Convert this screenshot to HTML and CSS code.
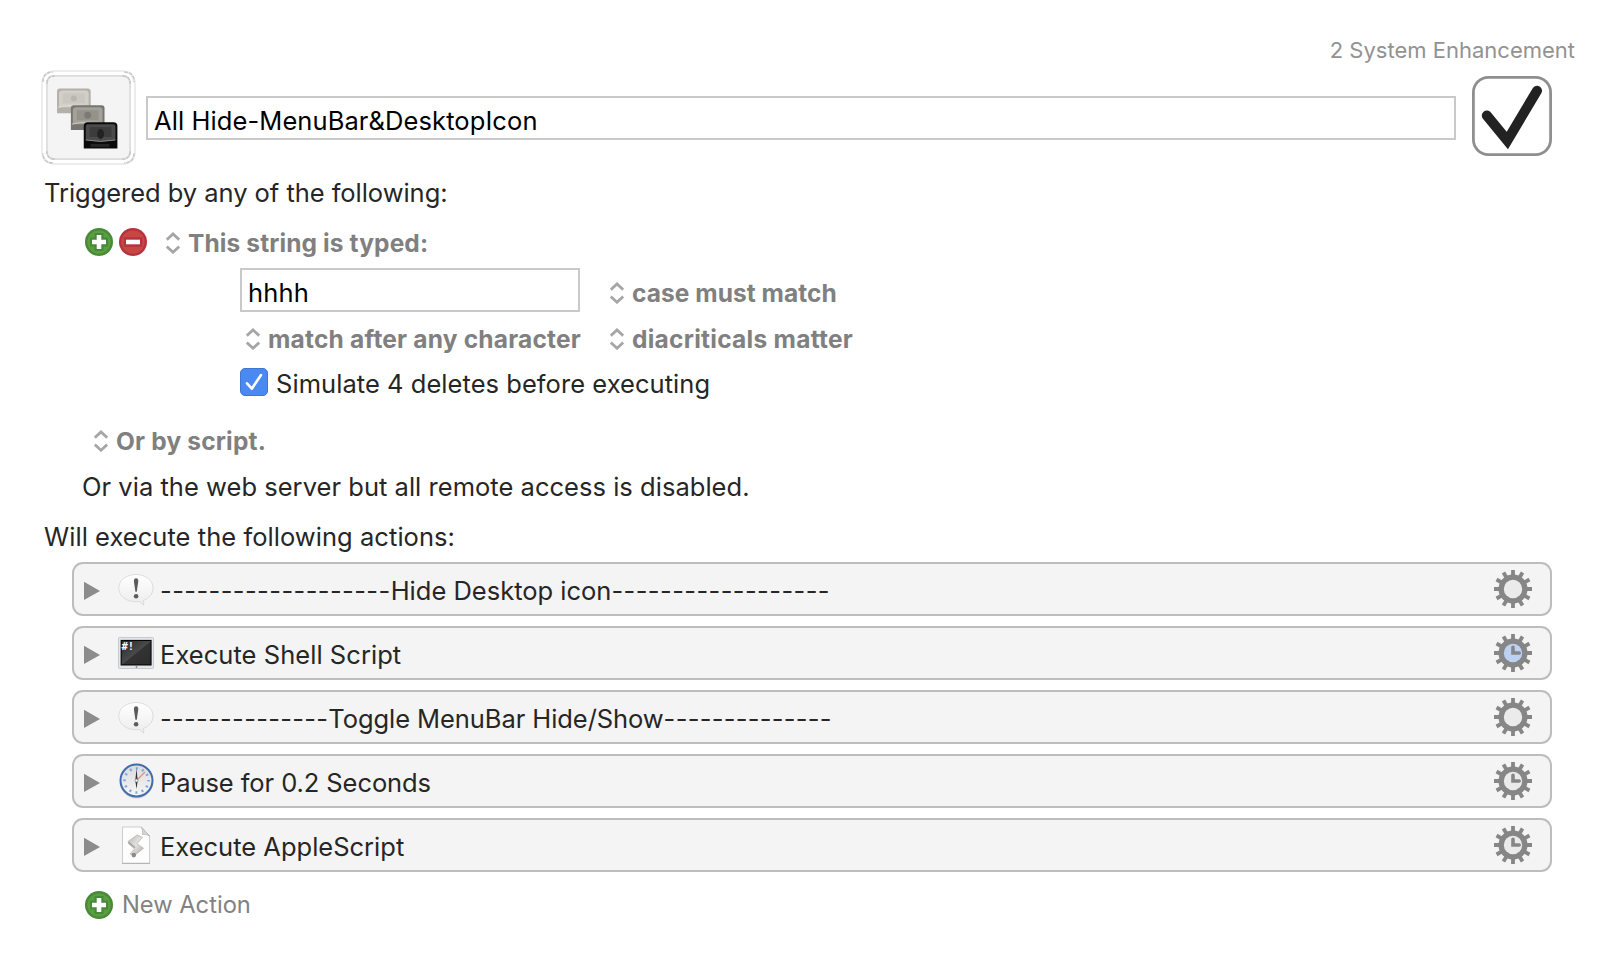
FILE: index.html
```
<!DOCTYPE html>
<html lang="en">
<head>
<meta charset="utf-8">
<title>Macro editor</title>
<link rel="stylesheet" href="styles.css">
</head>
<body>
<svg class="defs" width="0" height="0" aria-hidden="true">
  <defs>
    <linearGradient id="g-bubble" x1="0" y1="0" x2="0" y2="1"><stop offset="0" stop-color="#fff"/><stop offset="1" stop-color="#ececec"/></linearGradient>
    <linearGradient id="g-screen" x1="0" y1="0" x2="1" y2="1"><stop offset="0" stop-color="#2a2a2a"/><stop offset=".5" stop-color="#4a4a4a"/><stop offset=".52" stop-color="#333"/><stop offset="1" stop-color="#2c2c2c"/></linearGradient>
    <linearGradient id="g-face" x1="0" y1="0" x2="0" y2="1"><stop offset="0" stop-color="#d9dadc"/><stop offset="1" stop-color="#f7f7f7"/></linearGradient>
    <linearGradient id="g-scroll" x1="0" y1="0" x2="1" y2="1"><stop offset="0" stop-color="#b9b5b5"/><stop offset=".5" stop-color="#e4e1e1"/><stop offset="1" stop-color="#aaa6a6"/></linearGradient>
    <symbol id="updown" viewBox="0 0 14 22"><path d="M.800 7.600 7 2l6.200 5.600M.800 14.600 7 20.200l6.200-5.600" fill="none" stroke="#a6a6a6" stroke-width="2.800"/></symbol>
    <symbol id="plus" viewBox="0 0 28 28"><circle cx="14" cy="14" r="14" fill="#488a37"/><circle cx="14" cy="14" r="11.600" fill="#5a9e40"/><path d="M9.500 5h9v4.500H23v9h-4.500V23h-9v-4.500H5v-9h4.500z" fill="#47893a"/><path d="M11.700 7h4.600v4.700H21v4.600h-4.700V21h-4.600v-4.700H7v-4.600h4.700z" fill="#fff"/></symbol>
    <symbol id="minus" viewBox="0 0 28 28"><circle cx="14" cy="14" r="14" fill="#b5323f"/><circle cx="14" cy="14" r="11.600" fill="#c74743"/><path d="M4.800 9.300h18.400v9.400H4.800z" fill="#b5323f"/><path d="M7 11.700h14v4.600H7z" fill="#fff"/></symbol>
    <symbol id="tri" viewBox="0 0 16 20"><path d="M0 .700v18.300L16 10z" fill="#8c8c8c"/></symbol>
    <symbol id="bubble" viewBox="0 -1 36 38"><path d="M18 3.500C8.300 3.500.800 9.300.800 17S8.300 30.800 18 30.800c1.200 0 2.500-.100 3.600-.300 1 1.400 2.200 2.500 4 3.500.100-1.800-.100-3.300-.300-4.500C31.200 27.300 35 22.700 35 17 35 9.300 27.700 3.500 18 3.500z" fill="url(#g-bubble)" stroke="#d6d6d6" stroke-width=".800"/><path d="M15.900 9.800c0-3.300 4.400-3.300 4.400 0 0 2.200-1.100 7-1.500 11h-1.400c-.400-4-1.500-8.800-1.500-11z" fill="#5c5c5c"/><circle cx="18.100" cy="25.300" r="2.300" fill="#5c5c5c"/></symbol>
    <symbol id="shell" viewBox="0 0 36 36"><rect x=".500" y="2.500" width="35" height="31" rx=".800" fill="#e4e5eb" stroke="#c4c6ce" stroke-width=".900"/><rect x="2.600" y="4.900" width="31" height="25.600" fill="#050505"/><rect x="3.700" y="6" width="28.800" height="23.400" fill="url(#g-screen)"/><circle cx="18.500" cy="32" r=".900" fill="#888"/><text class="glyph-mono" x="3.500" y="15">#!</text></symbol>
    <symbol id="clock" viewBox="0 0 36 36"><ellipse cx="18.500" cy="19.500" rx="16.500" ry="16" fill="#bbb" opacity=".6"/><circle cx="18.500" cy="17.500" r="16" fill="url(#g-face)" stroke="#416bab" stroke-width="2"/><circle cx="18.500" cy="17.500" r="12" fill="none" stroke="#7fa5e4" stroke-width="2.600" stroke-dasharray="2 4.283" stroke-dashoffset="1"/><path d="m18.500 17.500 8.500-8.500" stroke="#e58e80" stroke-width="1.300"/><path d="M18.500 5.500 19.700 17.500l-1.200 8.500-1.200-8.500z" fill="#333"/><circle cx="18.500" cy="17.500" r="1.500" fill="#fff" stroke="#777" stroke-width=".600"/></symbol>
    <symbol id="script" viewBox="0 .5 36 38"><path d="M4.500 1.500h18.800l8.300 9v27.200H4.500z" fill="#fdfdfd" stroke="#c7c7c7" stroke-width=".900"/><path d="M4 38h28" stroke="#b5b5b5"/><path d="m23.300 1.500 8.300 9c-3-1.600-5-2-7.300-1.500.500-2.500.200-5-1-7.500z" fill="#d5d5d5" stroke="#aaa" stroke-width=".600"/><path d="M11 18.500 10 16l9-6.500 5.500 2.300-5.500 6.400 6.500 4.600-9 7.200-4.500-1.500 4.500-5z" fill="url(#g-scroll)" stroke="#b3aeae" stroke-width=".700" stroke-linejoin="round"/><path d="m10.500 17 6.500 5" fill="none" stroke="#a09b9b" stroke-width="1.400"/><circle cx="15.800" cy="29.600" r="2.300" fill="#8f8a8a"/></symbol>
    <symbol id="teeth" viewBox="0 0 38 38"><g stroke="#868686" stroke-width="3.800"><path d="M19 0v38"/><path d="M19 0v38" transform="rotate(30 19 19)"/><path d="M19 0v38" transform="rotate(60 19 19)"/><path d="M0 19h38"/><path d="M19 0v38" transform="rotate(120 19 19)"/><path d="M19 0v38" transform="rotate(150 19 19)"/></g><circle cx="19" cy="19" r="14.500" fill="#868686"/></symbol>
    <symbol id="gear" viewBox="0 0 38 38"><use href="#teeth"/><circle cx="19" cy="19" r="9.200" fill="#ebebeb"/></symbol>
    <symbol id="gear-clock" viewBox="0 0 38 38"><use href="#teeth"/><circle cx="19" cy="19" r="9.200" fill="#ebebeb"/><path d="M19 13.200V19h6.200" fill="none" stroke="#868686" stroke-width="3.600" stroke-linecap="round"/></symbol>
    <symbol id="gear-blue" viewBox="0 0 38 38"><use href="#teeth"/><circle cx="19" cy="19" r="9.200" fill="#bdd1f2"/><path d="M19 13.200V19h6.200" fill="none" stroke="#868686" stroke-width="3.600" stroke-linecap="round"/></symbol>
  </defs>
</svg>
<main class="editor">
  <div class="group"><span class="t">2 System Enhancement</span></div>
  <header class="head">
    <svg class="macro-icon" viewBox="0 0 96 96">
      <rect x="1" y="1" width="94" height="94" rx="13" fill="#fff" stroke="#ededed" stroke-width="2"/>
      <rect x="6" y="6" width="84" height="84" rx="7" fill="#f4f4f4" stroke="#dcdcdc" stroke-width="1.700"/>
      <g fill="none" stroke="#c8c8c8" stroke-width="1.600" stroke-dasharray="4 1"><path d="M2 12Q2 2 12 2M84 2q10 0 10 10M94 84q0 10-10 10M12 94Q2 94 2 84"/><path d="M6 14q0-8 8-8M82 6q8 0 8 8M90 82q0 8-8 8M14 90q-8 0-8-8"/></g>
      <g transform="translate(-.8 -.3)">
        <path d="M17 44V22q0-3 3-3h28q3 0 3 3v22z" fill="#b2b0a9"/><path d="M19 38V24q0-3 3-3h24q3 0 3 3v14z" fill="#d1cfc7"/><path d="M23 24h22v10H23z" fill="#c9c7c0"/><circle cx="34" cy="29" r="3" fill="#b8b6ae"/><path d="M18 38q16-4 32 0" stroke="#deddd6" fill="none"/>
        <path d="M31 61V39q0-3 3-3h28q3 0 3 3v22z" fill="#77756f"/><path d="M33 55V41q0-3 3-3h24q3 0 3 3v14z" fill="#a3a199"/><path d="M37 41h22v10H37z" fill="#949289"/><circle cx="48" cy="46" r="3.500" fill="#7c7a74"/><path d="M32 55q16-4 32 0" stroke="#c9c7bf" fill="none"/>
        <path d="M44 79.500V57q0-4 4-4h26q4 0 4 4v22.500z" fill="#0b0b0b"/><path d="M46 71V57q0-2 2-2h26q2 0 2 2v14q-15 3-30 0z" fill="#4b4b4b"/><path d="M50 58h22v10H50z" fill="#3c3c3c"/><ellipse cx="61" cy="65" rx="3.500" ry="5" fill="#222"/><path d="M46 71q15 3 30 0" stroke="#8b8b8b" fill="none"/><path d="M51 75h19v3H51z" fill="#252525"/>
      </g>
    </svg>
    <div class="field title"><span class="t">All Hide-MenuBar&amp;DesktopIcon</span></div>
    <svg class="enable" viewBox="0 0 80 80"><rect x="1.400" y="1.400" width="77.200" height="77.200" rx="15" fill="#fff" stroke="#8f8f8f" stroke-width="2.800"/><path d="M14.800 39.500 35.300 64.500 65 14.800" fill="none" stroke="#222" stroke-width="10" stroke-linecap="round" stroke-linejoin="miter"/></svg>
  </header>
  <p class="line heading triggered"><span class="t">Triggered by any of the following:</span></p>
  <section class="triggers">
    <div class="trigger">
      <svg class="round"><use href="#plus"/></svg><svg class="round"><use href="#minus"/></svg>
      <span class="popup"><svg class="updown"><use href="#updown"/></svg><b class="t">This string is typed:</b></span>
    </div>
    <div class="options">
      <div class="field typed"><span class="t">hhhh</span></div>
      <span class="popup case"><svg class="updown"><use href="#updown"/></svg><b class="t">case must match</b></span>
      <span class="popup after"><svg class="updown"><use href="#updown"/></svg><b class="t">match after any character</b></span>
      <span class="popup diacriticals"><svg class="updown"><use href="#updown"/></svg><b class="t">diacriticals matter</b></span>
    </div>
    <div class="simulate">
      <svg class="check" viewBox="0 0 28 28"><rect x=".500" y=".500" width="27" height="27" rx="4.500" fill="#4a88f2" stroke="#4076cf"/><path d="m7 15.300 4.800 5.400L21 7" fill="none" stroke="#fff" stroke-width="2.600" stroke-linecap="round" stroke-linejoin="round"/></svg>
      <span class="t">Simulate 4 deletes before executing</span>
    </div>
    <div class="popup by-script"><svg class="updown"><use href="#updown"/></svg><b class="t">Or by script.</b></div>
    <p class="line server"><span class="t">Or via the web server but all remote access is disabled.</span></p>
  </section>
  <p class="line heading execute"><span class="t">Will execute the following actions:</span></p>
  <section class="actions">
    <div class="action"><svg class="tri"><use href="#tri"/></svg><svg class="kind"><use href="#bubble"/></svg><span class="t"><span class="dash">-------------------</span>Hide Desktop icon<span class="dash">------------------</span></span><svg class="gear"><use href="#gear"/></svg></div>
    <div class="action"><svg class="tri"><use href="#tri"/></svg><svg class="kind"><use href="#shell"/></svg><span class="t shell">Execute Shell Script</span><svg class="gear"><use href="#gear-blue"/></svg></div>
    <div class="action"><svg class="tri"><use href="#tri"/></svg><svg class="kind"><use href="#bubble"/></svg><span class="t toggle"><span class="dash">--------------</span>Toggle MenuBar Hide/Show<span class="dash">--------------</span></span><svg class="gear"><use href="#gear"/></svg></div>
    <div class="action"><svg class="tri"><use href="#tri"/></svg><svg class="kind"><use href="#clock"/></svg><span class="t pause">Pause for 0.2 Seconds</span><svg class="gear"><use href="#gear-clock"/></svg></div>
    <div class="action"><svg class="tri"><use href="#tri"/></svg><svg class="kind"><use href="#script"/></svg><span class="t">Execute AppleScript</span><svg class="gear"><use href="#gear-clock"/></svg></div>
  </section>
  <div class="new-action"><svg class="round"><use href="#plus"/></svg><span class="t">New Action</span></div>
</main>
</body>
</html>
```
FILE: styles.css
```
* { box-sizing: border-box; }
body { margin: 0; background: #fff; color: #262626; font-family: Inter, "Liberation Sans", sans-serif; font-size: 25.500px; line-height: 32px; }
svg { display: block; flex: none; }
.defs { position: absolute; }
.t { white-space: pre; }
.glyph-mono { font: bold 10.500px "DejaVu Sans Mono", monospace; fill: #fff; }
.editor { width: 1616px; height: 960px; padding-top: 34px; overflow: hidden; }
.group { height: 36px; padding-right: 41px; text-align: right; color: #929292; font-size: 22px; }
.head { display: flex; height: 96px; padding-left: 41px; }
.macro-icon { width: 95px; height: 95px; }
.field { display: flex; align-items: center; height: 44px; border: 2px solid #c9c9c9; padding: 5px 0 0 6px; color: #000; }
.title { width: 1310px; margin: 26px 16px 0 10px; letter-spacing: 0.090px; }
.enable { width: 80px; height: 80px; margin-top: 6px; }
.line { margin: 0; }
.heading { padding-left: 44px; }
.triggered { padding-top: 11px; letter-spacing: -0.040px; }
.trigger { display: flex; align-items: center; gap: 6px; height: 32px; margin-top: 17px; padding-left: 85px; }
.round { width: 28px; height: 28px; }
.popup { display: flex; align-items: center; gap: 8px; color: #808080; font-size: 24.500px; letter-spacing: 0.110px; }
.updown { width: 14px; height: 22px; }
.trigger .popup { margin-left: 13px; padding-top: 2px; }
.options { display: grid; grid-template-columns: 370px auto; grid-template-rows: 44px 54px; align-items: center; padding: 10px 0 0 240px; }
.typed { width: 340px; letter-spacing: 0.200px; }
.case { padding-top: 6px; letter-spacing: 0.050px; }
.after { padding-left: 6px; letter-spacing: 0.200px; }
.diacriticals { letter-spacing: 0.260px; }
.simulate { display: flex; align-items: center; gap: 8px; height: 32px; padding-left: 240px; letter-spacing: 0.050px; }
.simulate .t { padding-top: 3px; }
.check { width: 28px; height: 28px; }
.by-script { height: 32px; margin-top: 27px; padding-left: 94px; letter-spacing: 0.180px; }
.server { padding: 14px 0 0 82px; letter-spacing: 0.030px; }
.execute { padding-top: 18px; letter-spacing: 0.050px; }
.actions { display: grid; gap: 10px; padding: 9px 64px 0 72px; }
.action { display: flex; align-items: center; height: 54px; border: 2px solid #bdbdbd; border-radius: 11px; background: #f4f4f4; padding: 0 18px 0 10px; }
.action .t { padding-top: 3px; }
.dash { letter-spacing: 0.410px; }
.shell { letter-spacing: 0.050px; }
.toggle { letter-spacing: -0.070px; }
.toggle .dash { letter-spacing: 0.290px; }
.pause { letter-spacing: -0.080px; }
.tri { width: 16px; height: 20px; margin-top: 3px; }
.kind { width: 36px; height: 38px; margin: 0 6px 0 18px; }
.gear { width: 38px; height: 38px; margin-left: auto; }
.new-action { display: flex; align-items: center; gap: 9px; height: 32px; margin-top: 17px; padding-left: 85px; color: #828282; font-size: 23.700px; }
```
